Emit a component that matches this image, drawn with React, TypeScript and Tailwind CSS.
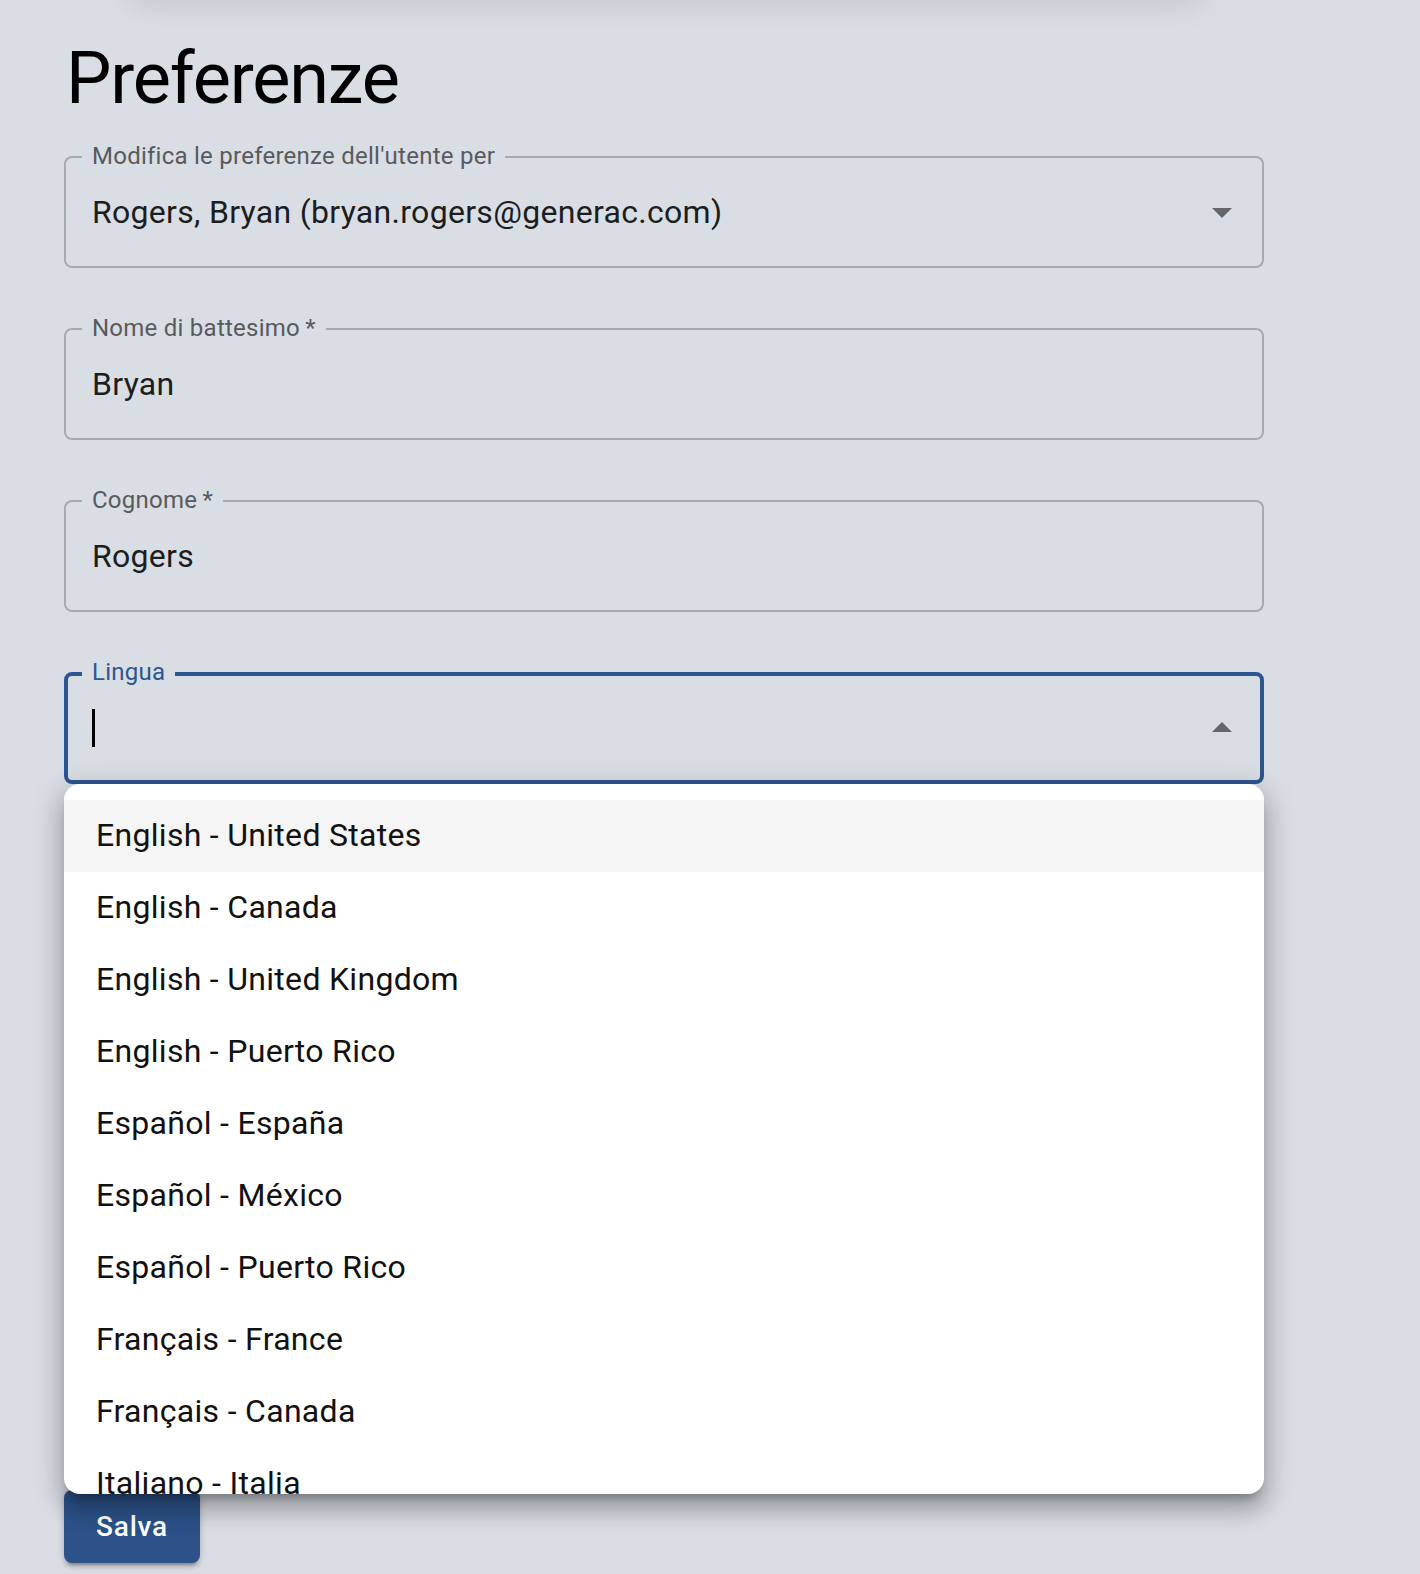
import React from "react";

const options = [
  "English - United States",
  "English - Canada",
  "English - United Kingdom",
  "English - Puerto Rico",
  "Español - España",
  "Español - México",
  "Español - Puerto Rico",
  "Français - France",
  "Français - Canada",
  "Italiano - Italia",
];

function ArrowDown() {
  return (
    <svg width="48" height="48" viewBox="0 0 24 24" className="shrink-0">
      <path d="M7 10l5 5 5-5z" fill="#646669" />
    </svg>
  );
}

function ArrowUp() {
  return (
    <svg width="48" height="48" viewBox="0 0 24 24" className="shrink-0">
      <path d="M7 14l5-5 5 5z" fill="#646669" />
    </svg>
  );
}

function Field({
  label,
  value,
  arrow,
}: {
  label: string;
  value: string;
  arrow?: boolean;
}) {
  return (
    <div className="relative flex h-[112px] w-[1200px] items-center rounded-[8px] border-2 border-[#a7aaaf] pl-[26px] pr-[16px]">
      <span className="absolute left-[16px] top-[-14px] bg-[#d9dde4] px-[10px] text-[24px] leading-[24px] tracking-[0.25px] text-[#595a5e]">
        {label}
      </span>
      <span className="flex-1 text-[32px] tracking-[0.3px] text-[#1c1d1e]">{value}</span>
      {arrow && <ArrowDown />}
    </div>
  );
}

export default function App() {
  return (
    <div className="flex min-h-screen w-full flex-col overflow-hidden bg-[#d9dde4] font-['Roboto','Liberation_Sans',sans-serif]">
      {/* app bar above the page, only its shadow reaches down */}
      <div className="-mt-[40px] ml-[130px] h-[40px] w-[1070px] shrink-0 bg-[#d9dde4] shadow-[0_0_34px_rgba(0,0,0,0.13)]" />

      <div className="flex flex-col pl-[64px]">
        <h1 className="ml-[2px] mt-[43px] text-[72px] font-normal leading-[72px] tracking-[-1.2px] text-black">
          Preferenze
        </h1>

        <div className="mt-[41px] flex flex-col gap-[60px]">
          <Field
            label="Modifica le preferenze dell'utente per"
            value="Rogers, Bryan (bryan.rogers@generac.com)"
            arrow
          />
          <Field label={"Nome di battesimo\u2009*"} value="Bryan" />
          <Field label={"Cognome\u2009*"} value="Rogers" />

          {/* language autocomplete, open */}
          <div className="relative w-[1200px]">
            <div className="relative flex h-[112px] items-center rounded-[8px] border-4 border-[#2c5690] pl-[24px] pr-[14px]">
              <span className="absolute left-[14px] top-[-16px] bg-[#d9dde4] px-[10px] text-[24px] leading-[24px] tracking-[0.25px] text-[#2c5690]">
                Lingua
              </span>
              <div className="flex-1">
                <div className="h-[38px] w-[3px] bg-black" />
              </div>
              <ArrowUp />
            </div>

            <ul className="absolute left-0 top-[112px] z-10 h-[710px] w-[1200px] overflow-hidden rounded-[16px] bg-white pt-[16px] shadow-[0_10px_10px_-6px_rgba(0,0,0,0.26),0_16px_22px_2px_rgba(0,0,0,0.18),0_6px_30px_6px_rgba(0,0,0,0.13)]">
              {options.map((o, i) => (
                <li
                  key={o}
                  className={`flex h-[72px] items-center pb-[3px] pl-[32px] text-[32px] tracking-[0.3px] text-[#111] ${
                    i === 0 ? "bg-[#f5f5f5]" : ""
                  }`}
                >
                  {o}
                </li>
              ))}
            </ul>
          </div>
        </div>

        <button className="mt-[706px] flex h-[73px] w-[136px] items-center rounded-[8px] bg-[#2c5289] pl-[32px] text-[28px] font-medium tracking-[0.8px] text-white shadow-[0_6px_2px_-4px_rgba(0,0,0,0.2),0_4px_4px_0_rgba(0,0,0,0.14),0_2px_10px_0_rgba(0,0,0,0.12)]">
          Salva
        </button>
      </div>
    </div>
  );
}
